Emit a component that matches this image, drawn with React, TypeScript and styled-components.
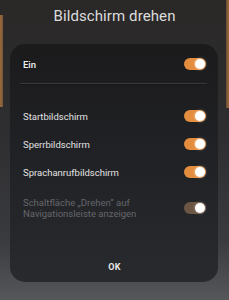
import React from 'react';
import styled, { createGlobalStyle } from 'styled-components';

const GlobalStyle = createGlobalStyle`
  html, body {
    margin: 0;
    padding: 0;
  }
  body {
    font-family: Roboto, "Noto Sans", "Liberation Sans", sans-serif;
    background: #2c2b2b;
  }
`;

// phone wallpaper bleeding at the edges, plus the dimmed backdrop
const Screen = styled.div`
  width: 229px;
  height: 300px;
  overflow: hidden;
  box-sizing: border-box;
  padding-top: 6px;
  background:
    linear-gradient(to right, #9a6a3c 0, #7a5636 3px, transparent 3px) 0 15px / 4px 92px no-repeat,
    linear-gradient(to left, #9a6a3c 0, #6a4c34 3px, transparent 3px) 100% 0 / 4px 108px no-repeat,
    linear-gradient(180deg, #2a2827 0%, #2e2e30 45%, #3a3b3f 80%, #55575b 100%);
`;

const Title = styled.h1`
  margin: 0;
  height: 20px;
  line-height: 20px;
  text-align: center;
  font-size: 15px;
  font-weight: 400;
  color: #dcdcdc;
  letter-spacing: 0.1px;
`;

const Card = styled.div`
  margin: 18px 11px 0 10px;
  height: 238px;
  box-sizing: border-box;
  border-radius: 15px;
  padding: 6px 12px 0 13px;
  display: flex;
  flex-direction: column;
  background: linear-gradient(180deg, #1b1b1c 0%, #212226 50%, #292a2e 100%);
`;

const Row = styled.div<{ $tall?: boolean }>`
  display: flex;
  align-items: center;
  justify-content: space-between;
  gap: 10px;
  min-height: 28px;
  padding: ${(p) => (p.$tall ? '8px 0' : '0')};
`;

const Label = styled.span<{ $strong?: boolean; $dim?: boolean }>`
  font-size: 9.5px;
  line-height: 11px;
  font-weight: ${(p) => (p.$strong ? 500 : 400)};
  color: ${(p) => (p.$dim ? '#65666a' : p.$strong ? '#f2f2f2' : '#e2e2e2')};
`;

const Divider = styled.div`
  height: 1px;
  margin: 5px -1px 17px -3px;
  background: #3a3a3d;
  border-bottom: 1px solid #161617;
`;

const Track = styled.span<{ $disabled?: boolean }>`
  position: relative;
  flex: none;
  width: 22px;
  height: 12px;
  border-radius: 6px;
  background: ${(p) => (p.$disabled ? '#6b5643' : '#e48d3e')};
`;

const Thumb = styled.span<{ $disabled?: boolean }>`
  position: absolute;
  top: 1px;
  right: 1px;
  width: 10px;
  height: 10px;
  border-radius: 50%;
  background: #ffffff;
  box-shadow: 0 0 3px ${(p) => (p.$disabled ? 'rgba(255,255,255,0.5)' : 'rgba(255,230,200,0.9)')};
`;

const Footer = styled.div`
  margin-top: auto;
  height: 30px;
  display: flex;
  align-items: center;
  justify-content: center;
`;

const OkButton = styled.button`
  border: none;
  background: none;
  padding: 0;
  font-family: inherit;
  font-size: 9px;
  font-weight: 700;
  color: #e6e6e6;
  letter-spacing: 0.2px;
`;

const Toggle: React.FC<{ disabled?: boolean }> = ({ disabled }) => (
  <Track $disabled={disabled}>
    <Thumb $disabled={disabled} />
  </Track>
);

const options = ['Startbildschirm', 'Sperrbildschirm', 'Sprachanrufbildschirm'];

export default function App() {
  return (
    <>
      <GlobalStyle />
      <Screen>
        <Title>Bildschirm drehen</Title>
        <Card>
          <Row>
            <Label $strong>Ein</Label>
            <Toggle />
          </Row>
          <Divider />
          {options.map((o) => (
            <Row key={o}>
              <Label>{o}</Label>
              <Toggle />
            </Row>
          ))}
          <Row $tall>
            <Label $dim>
              Schaltfläche „Drehen“ auf
              <br />
              Navigationsleiste anzeigen
            </Label>
            <Toggle disabled />
          </Row>
          <Footer>
            <OkButton>OK</OkButton>
          </Footer>
        </Card>
      </Screen>
    </>
  );
}
